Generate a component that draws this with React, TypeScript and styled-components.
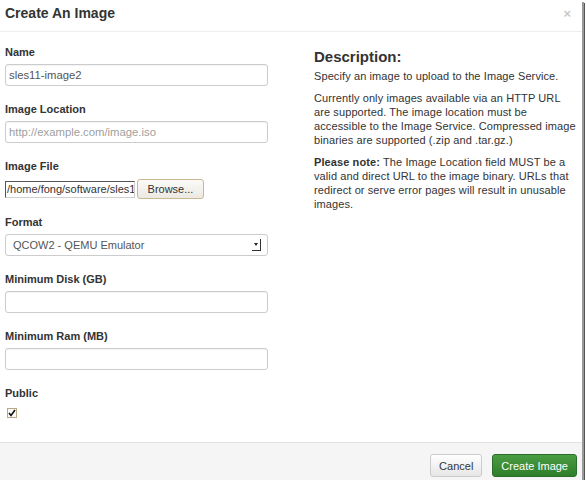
import * as React from 'react'
import styled, { createGlobalStyle } from 'styled-components'

const GlobalStyle = createGlobalStyle`
  html, body {
    margin: 0;
    padding: 0;
    background: #ffffff;
  }
  body {
    font-family: "Liberation Sans", Arial, sans-serif;
    color: #333333;
  }
`

const Modal = styled.div`
  width: 582px;
  height: 480px;
  background: #ffffff;
  box-shadow: 2px 2px 0 #9a9a9a, 3px 3px 0 #555555;
  display: flex;
  flex-direction: column;
  box-sizing: border-box;
`

const Header = styled.div`
  height: 32px;
  box-sizing: border-box;
  border-bottom: 1px solid #eeeeee;
  display: flex;
  align-items: center;
  justify-content: space-between;
  padding: 0 11px 5px 5px;
`

const Title = styled.h3`
  margin: 0;
  font-size: 14px;
  font-weight: bold;
  color: #333333;
`

const Close = styled.span`
  font-size: 13px;
  color: #c8c8c8;
  font-weight: bold;
`

const Body = styled.div`
  flex: 1;
  display: flex;
  padding: 14px 6px 0 5px;
`

const LeftCol = styled.div`
  width: 263px;
  display: flex;
  flex-direction: column;
`

const RightCol = styled.div`
  margin-left: 46px;
  flex: 1;
  padding-top: 2px;
`

const Field = styled.div`
  display: flex;
  flex-direction: column;
  margin-bottom: 17px;
`

const Label = styled.label`
  font-size: 11px;
  font-weight: bold;
  color: #333333;
  margin-bottom: 5px;
  line-height: 13px;
`

const TextInput = styled.input`
  width: 263px;
  height: 22px;
  box-sizing: border-box;
  border: 1px solid #cccccc;
  border-radius: 3px;
  padding: 0 3px;
  font-family: "Liberation Sans", Arial, sans-serif;
  font-size: 11.3px;
  color: #555555;
  box-shadow: inset 0 1px 1px rgba(0, 0, 0, 0.05);
  &::placeholder {
    color: #a0a0a0;
  }
`

const FileRow = styled.div`
  display: flex;
  align-items: center;
  gap: 2px;
  height: 20px;
  margin-top: 1px;
`

const FilePath = styled.div`
  width: 130px;
  height: 17px;
  box-sizing: border-box;
  border-top: 1px solid #555555;
  border-left: 1px solid #555555;
  border-right: 1px solid #cfcfcf;
  border-bottom: 1px solid #cfcfcf;
  font-size: 11px;
  line-height: 15px;
  color: #333333;
  white-space: nowrap;
  overflow: hidden;
  padding-left: 1px;
`

const Browse = styled.button`
  width: 67px;
  height: 20px;
  box-sizing: border-box;
  border: 1px solid #c9b893;
  border-radius: 3px;
  background: linear-gradient(#fbfaf7, #ece9e2);
  font-family: "Liberation Sans", Arial, sans-serif;
  font-size: 11px;
  color: #333333;
  padding: 0;
`

const Select = styled.div`
  width: 263px;
  height: 22px;
  box-sizing: border-box;
  border: 1px solid #cccccc;
  border-radius: 3px;
  display: flex;
  align-items: center;
  justify-content: space-between;
  padding: 0 6px 0 7px;
  font-size: 11px;
  color: #555555;
`

const SelectArrow = styled.span`
  width: 9px;
  height: 12px;
  box-sizing: border-box;
  border-right: 1px solid #333333;
  border-bottom: 1px solid #333333;
  display: flex;
  align-items: center;
  justify-content: center;
  &::after {
    content: "";
    border-left: 2.5px solid transparent;
    border-right: 2.5px solid transparent;
    border-top: 3px solid #222222;
  }
`

const Check = styled.span`
  width: 10px;
  height: 10px;
  box-sizing: border-box;
  border: 1px solid #b8a886;
  background: #fbfaf6;
  display: flex;
  align-items: center;
  justify-content: center;
  margin: 3px 0 0 2px;
`

const DescTitle = styled.h3`
  margin: 0 0 3px 0;
  font-size: 15px;
  font-weight: bold;
  color: #333333;
  line-height: 18px;
`

const Para = styled.p`
  margin: 0 0 8px 0;
  font-size: 11px;
  line-height: 14px;
  color: #333333;
  letter-spacing: 0.1px;
`

const Footer = styled.div`
  height: 38px;
  box-sizing: border-box;
  background: #f5f5f5;
  border-top: 1px solid #e3e3e3;
  display: flex;
  align-items: flex-start;
  justify-content: flex-end;
  gap: 10px;
  padding: 11px 5px 0 0;
`

const Button = styled.button<{ $primary?: boolean }>`
  height: 23px;
  box-sizing: border-box;
  border-radius: 3px;
  font-family: "Liberation Sans", Arial, sans-serif;
  font-size: 11px;
  padding: 0 8px;
  border: 1px solid ${p => (p.$primary ? '#2b6e2b' : '#cccccc')};
  background: ${p =>
    p.$primary
      ? 'linear-gradient(#4a9d42, #2f7d2b)'
      : 'linear-gradient(#ffffff, #e6e6e6)'};
  color: ${p => (p.$primary ? '#ffffff' : '#333333')};
`

const fields = [
  { label: 'Name', value: 'sles11-image2' },
  { label: 'Image Location', placeholder: 'http://example.com/image.iso' },
]

export default function App() {
  return (
    <>
      <GlobalStyle />
      <Modal>
        <Header>
          <Title>Create An Image</Title>
          <Close>×</Close>
        </Header>
        <Body>
          <LeftCol>
            {fields.map(f => (
              <Field key={f.label}>
                <Label>{f.label}</Label>
                <TextInput defaultValue={f.value} placeholder={f.placeholder} />
              </Field>
            ))}
            <Field>
              <Label>Image File</Label>
              <FileRow>
                <FilePath>/home/fong/software/sles1</FilePath>
                <Browse>Browse...</Browse>
              </FileRow>
            </Field>
            <Field>
              <Label>Format</Label>
              <Select>
                QCOW2 - QEMU Emulator
                <SelectArrow />
              </Select>
            </Field>
            <Field>
              <Label>Minimum Disk (GB)</Label>
              <TextInput />
            </Field>
            <Field>
              <Label>Minimum Ram (MB)</Label>
              <TextInput />
            </Field>
            <Field>
              <Label>Public</Label>
              <Check>
                <svg width="8" height="8" viewBox="0 0 8 8">
                  <path d="M1 4 L3 6.5 L7 1" fill="none" stroke="#111" strokeWidth="1.6" />
                </svg>
              </Check>
            </Field>
          </LeftCol>
          <RightCol>
            <DescTitle>Description:</DescTitle>
            <Para>Specify an image to upload to the Image Service.</Para>
            <Para>
              Currently only images available via an HTTP URL are supported. The image
              location must be accessible to the Image Service. Compressed image binaries
              are supported (.zip and .tar.gz.)
            </Para>
            <Para>
              <strong>Please note:</strong> The Image Location field MUST be a valid and
              direct URL to the image binary. URLs that redirect or serve error pages will
              result in unusable images.
            </Para>
          </RightCol>
        </Body>
        <Footer>
          <Button>Cancel</Button>
          <Button $primary>Create Image</Button>
        </Footer>
      </Modal>
    </>
  )
}
